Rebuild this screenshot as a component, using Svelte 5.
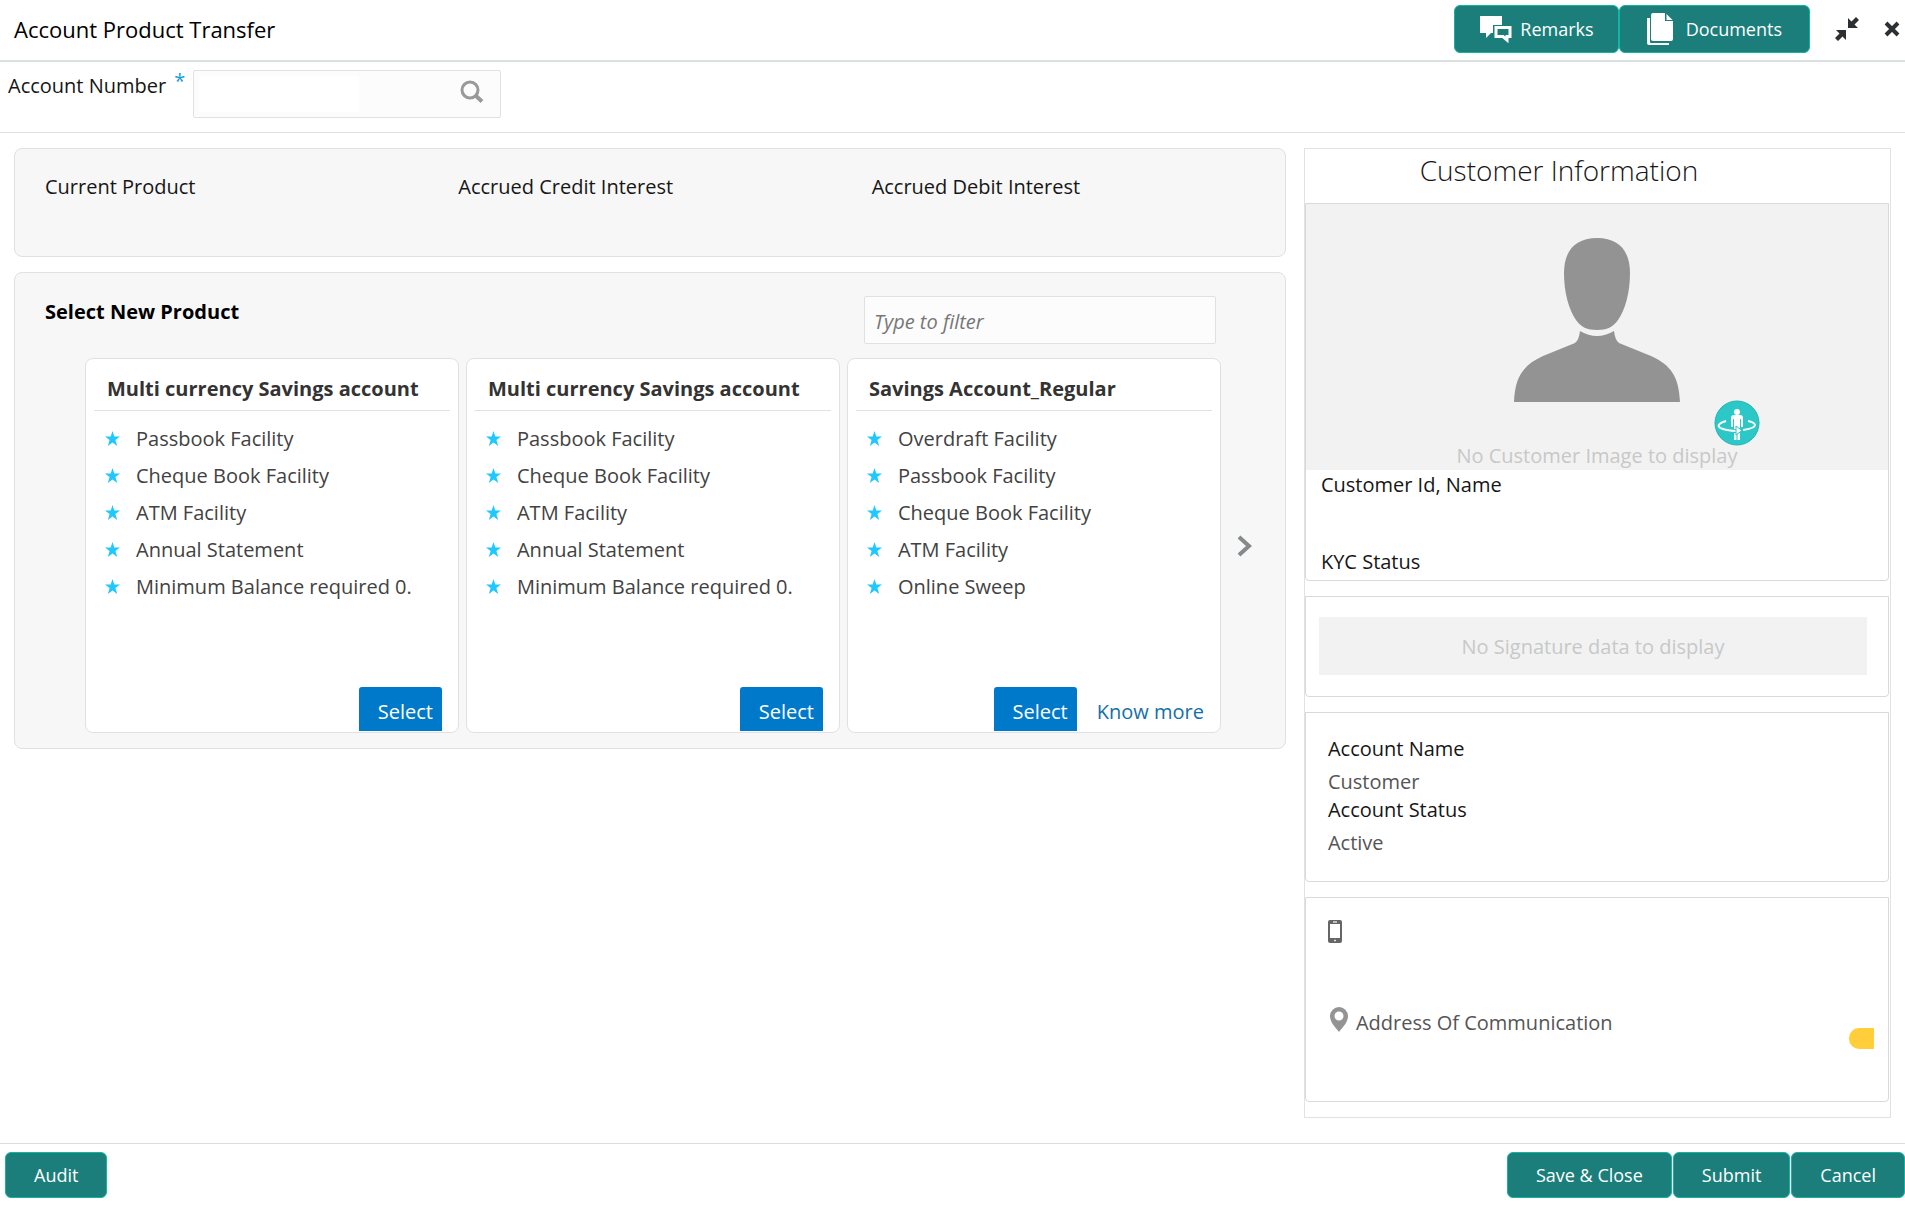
<script lang="ts">
	type Product = { id: number; title: string; features: string[]; more?: boolean };

	const summary = ['Current Product', 'Accrued Credit Interest', 'Accrued Debit Interest'];

	const products: Product[] = [
		{
			id: 1,
			title: 'Multi currency Savings account',
			features: [
				'Passbook Facility',
				'Cheque Book Facility',
				'ATM Facility',
				'Annual Statement',
				'Minimum Balance required 0.'
			]
		},
		{
			id: 2,
			title: 'Multi currency Savings account',
			features: [
				'Passbook Facility',
				'Cheque Book Facility',
				'ATM Facility',
				'Annual Statement',
				'Minimum Balance required 0.'
			]
		},
		{
			id: 3,
			title: 'Savings Account_Regular',
			features: [
				'Overdraft Facility',
				'Passbook Facility',
				'Cheque Book Facility',
				'ATM Facility',
				'Online Sweep'
			],
			more: true
		}
	];

	let accountNumber = $state('');
	let filter = $state('');
	let selectedId: number | null = $state(null);

	const visible = $derived(
		products.filter((p) => p.title.toLowerCase().includes(filter.trim().toLowerCase()))
	);
</script>

<div class="page">
	<header class="title-bar">
		<h1>Account Product Transfer</h1>
		<div class="title-actions">
			<button class="btn remarks" type="button">
				<svg width="33" height="28" viewBox="0 0 33 28" aria-hidden="true">
					<path d="M1 1h22v9H14v8h-2l-5 5v-5H1z" fill="#fff" />
					<path d="M17 12.500h14v9h-3v3.500l-4-3.500h-7z" fill="none" stroke="#fff" stroke-width="3" />
				</svg>
				Remarks
			</button>
			<button class="btn documents" type="button">
				<svg width="27" height="33" viewBox="0 0 27 33" aria-hidden="true">
					<path d="M0 5h3v24q0 1 1 1h18v2H2q-2 0-2-2z" fill="#fff" />
					<path d="M6 0h12v8h8v18q0 2-2 2H6q-2 0-2-2V2q0-2 2-2z" fill="#fff" />
					<path d="M19.500 1l6 6h-6z" fill="#fff" />
				</svg>
				Documents
			</button>
			<button class="icon-btn" type="button" aria-label="Collapse">
				<svg width="26" height="26" viewBox="0 0 26 26" aria-hidden="true">
					<path d="M14 2v10h10l-3.500-3.500L25 4l-3-3-4.500 4.500z" fill="#2d3033" />
					<path d="M12 24V14H2l3.500 3.500L1 22l3 3 4.500-4.500z" fill="#2d3033" />
				</svg>
			</button>
			<button class="icon-btn" type="button" aria-label="Close">
				<svg width="16" height="16" viewBox="0 0 16 16" aria-hidden="true">
					<path d="M2 2l12 12M14 2L2 14" stroke="#2d3033" stroke-width="4" />
				</svg>
			</button>
		</div>
	</header>

	<div class="account-row">
		<label for="account-number">Account Number <span class="required">*</span></label>
		<div class="account-field">
			<input id="account-number" type="text" bind:value={accountNumber} />
			<button class="icon-btn search" type="button" aria-label="Search account">
				<svg width="24" height="24" viewBox="0 0 24 24" fill="none" stroke="#999" aria-hidden="true">
					<circle cx="10" cy="10" r="8" stroke-width="3" />
					<path d="M15.500 15.500l6.500 6" stroke-width="4" />
				</svg>
			</button>
		</div>
	</div>

	<main>
		<div class="left">
			<section class="panel summary">
				{#each summary as item}
					<div>{item}</div>
				{/each}
			</section>

			<section class="panel picker">
				<div class="picker-head">
					<h2>Select New Product</h2>
					<input
						class="filter"
						type="text"
						placeholder="Type to filter"
						aria-label="Type to filter"
						bind:value={filter}
					/>
				</div>
				<div class="carousel">
					<div class="cards">
						{#each visible as product (product.id)}
							<article class="card">
								<h3>{product.title}</h3>
								<ul>
									{#each product.features as feature}
										<li>
											<svg width="15" height="15" viewBox="0 0 15 15" aria-hidden="true">
												<path
													d="M7.500 0l1.800 5.600H15l-4.600 3.500 1.800 5.900-4.700-3.600L2.800 15l1.800-5.900L0 5.600h5.700z"
													fill="#1fc8ff"
												/>
											</svg>
											{feature}
										</li>
									{/each}
								</ul>
								<div class="card-actions">
									<button class="select" type="button" onclick={() => (selectedId = product.id)}>
										Select
									</button>
									{#if product.more}
										<a href="#more">Know more</a>
									{/if}
								</div>
							</article>
						{/each}
					</div>
					<button class="icon-btn next" type="button" aria-label="Next products">
						<svg width="16" height="22" viewBox="0 0 16 22" aria-hidden="true">
							<path d="M2 2l10 9-10 9" fill="none" stroke="#85898b" stroke-width="4" />
						</svg>
					</button>
				</div>
			</section>
		</div>

		<aside class="customer">
			<h2>Customer Information</h2>

			<section class="box profile">
				<div class="photo">
					<svg class="avatar" width="168" height="166" viewBox="0 0 168 166" aria-hidden="true">
						<path
							d="M84 1C106 1 117 14 117 36C117 56 112 73 105 83C100 90 94 93 84 93C74 93 68 90 63 83C56 73 51 56 51 36C51 14 62 1 84 1z"
							fill="#939393"
						/>
						<path
							d="M67 94Q84 104 101 94Q102 103 106 106L138 119C158 128 166 140 167 165H1C2 140 10 128 30 119L62 106Q66 103 67 94z"
							fill="#939393"
						/>
					</svg>
					<button class="icon-btn view360" type="button" aria-label="Customer 360 view">
						<svg width="46" height="46" viewBox="0 0 46 46" aria-hidden="true">
							<circle cx="23" cy="23" r="22" fill="#2bc8c7" stroke="#22b5b2" />
							<circle cx="23" cy="12" r="3" fill="#fff" />
							<path d="M20 15h6q3 0 3 3v9h-2v-8h-1v10h-6V19h-1v8h-2v-9q0-3 3-3z" fill="#fff" />
							<path d="M20 33h2.500v7H20zM23.500 33H26v7h-2.500z" fill="#fff" />
							<path d="M12 21C2 24 2 28 13 30Q18 31 23 31" fill="none" stroke="#fff" stroke-width="2" />
							<path d="M34 21C44 23 44 28 29 30" fill="none" stroke="#fff" stroke-width="2" />
							<path d="M22 26l6 4.500-6 4.500z" fill="#fff" stroke="#2bc8c7" />
						</svg>
					</button>
					<span>No Customer Image to display</span>
				</div>
				<div class="profile-info">
					<div>Customer Id, Name</div>
					<div>KYC Status</div>
				</div>
			</section>

			<section class="box signature">
				<div>No Signature data to display</div>
			</section>

			<section class="box account">
				<dl>
					<dt>Account Name</dt>
					<dd>Customer</dd>
					<dt>Account Status</dt>
					<dd>Active</dd>
				</dl>
			</section>

			<section class="box contact">
				<svg width="14" height="23" viewBox="0 0 14 23" aria-hidden="true">
					<rect width="14" height="23" rx="2" fill="#666" />
					<path d="M2 4h10v14H2z" fill="#fff" />
					<path d="M5 2h4M6 20.500h2" stroke="#ddd" stroke-width="1.500" />
				</svg>
				<div class="address">
					<svg width="18" height="25" viewBox="0 0 18 25" aria-hidden="true">
						<path
							d="M9 0a9 9 0 0 1 9 9c0 6-5 11-9 16C5 20 0 15 0 9a9 9 0 0 1 9-9zm0 4.500a4.500 4.500 0 1 0 0 9 4.500 4.500 0 0 0 0-9z"
							fill="#949494"
						/>
					</svg>
					<span>Address Of Communication</span>
					<div class="tag"></div>
				</div>
			</section>
		</aside>
	</main>

	<footer>
		<button class="btn" type="button">Audit</button>
		<div class="footer-actions">
			<button class="btn" type="button">Save &amp; Close</button>
			<button class="btn" type="button">Submit</button>
			<button class="btn" type="button">Cancel</button>
		</div>
	</footer>
</div>

<style>
	:global(body) {
		background: #fff;
	}
	.page {
		display: flex;
		flex-direction: column;
		min-height: 100vh;
		box-sizing: border-box;
		overflow-x: hidden;
		color: #161616;
		font-family: 'Open Sans', 'Noto Sans', sans-serif;
		font-size: 20px;
		line-height: 28px;
	}
	.page :global(*) {
		box-sizing: border-box;
	}
	h1,
	h2,
	h3,
	ul,
	dl,
	dd {
		margin: 0;
		padding: 0;
	}
	button,
	input {
		font: inherit;
	}
	svg {
		display: block;
		flex: none;
	}

	/* Buttons */
	.btn {
		display: flex;
		align-items: center;
		justify-content: center;
		height: 48px;
		padding: 0 28px;
		border: 1px solid #12b5a2;
		border-radius: 6px;
		background: #1b7e7a;
		color: #fff;
		font-size: 18px;
		cursor: pointer;
	}
	.icon-btn {
		display: flex;
		padding: 0;
		border: none;
		background: none;
		cursor: pointer;
	}

	/* Title bar */
	.title-bar {
		display: flex;
		align-items: center;
		justify-content: space-between;
		height: 62px;
		padding: 0 5px 2px 14px;
		border-bottom: 2px solid #dbe0e2;
	}
	h1 {
		color: #000;
		font-size: 22px;
		font-weight: 400;
	}
	.title-actions {
		display: flex;
		align-items: center;
	}
	.title-actions .icon-btn {
		margin-left: 24px;
	}
	.remarks {
		gap: 8px;
		padding: 0 24px;
	}
	.documents {
		gap: 12px;
		padding: 0 27px;
	}

	/* Account row */
	.account-row {
		display: flex;
		gap: 8px;
		height: 71px;
		padding: 8px;
		border-bottom: 1px solid #e0e0e0;
	}
	.account-row label {
		display: flex;
		gap: 8px;
		padding-top: 2px;
	}
	.required {
		color: #14a0dc;
		line-height: 18px;
	}
	.account-field {
		display: flex;
		align-items: center;
		justify-content: space-between;
		width: 308px;
		height: 48px;
		padding: 5px 16px 5px 5px;
		border: 1px solid #dfe1e2;
		border-radius: 2px;
		background: #fcfcfc;
	}
	.account-field input {
		width: 160px;
		height: 100%;
		border: none;
		background: #fff;
	}
	.search {
		padding-bottom: 4px;
	}

	/* Main */
	main {
		display: grid;
		grid-template-columns: 13fr 6fr;
		gap: 18px;
		flex: 1;
		align-items: start;
		padding: 15px 14px 24px 14px;
	}
	.left {
		display: flex;
		flex-direction: column;
		gap: 15px;
		min-width: 0;
	}
	.panel {
		border: 1px solid #dfe1e2;
		border-radius: 8px;
		background: #f7f7f7;
	}
	.summary {
		display: grid;
		grid-template-columns: repeat(3, 1fr);
		height: 109px;
		padding: 24px 0 0 30px;
	}
	.picker {
		padding: 23px 32px 15px 30px;
	}
	.picker-head {
		display: flex;
		justify-content: space-between;
		margin-bottom: 14px;
		padding-right: 37px;
	}
	.picker-head h2 {
		padding-top: 2px;
		color: #000;
		font-size: 20px;
		font-weight: 700;
	}
	.filter {
		width: 352px;
		height: 48px;
		padding: 2px 9px 0;
		border: 1px solid #dfe1e2;
		border-radius: 2px;
		background: #fcfcfc;
	}
	.filter::placeholder {
		color: #777;
		font-style: italic;
		opacity: 1;
	}
	.carousel {
		display: flex;
		align-items: center;
		gap: 16px;
		padding-left: 40px;
	}
	.cards {
		display: grid;
		grid-template-columns: repeat(3, 1fr);
		gap: 7px;
		flex: 1;
	}
	.card {
		display: flex;
		flex-direction: column;
		height: 375px;
		padding: 16px 8px 1px;
		border: 1px solid #dfe1e2;
		border-radius: 8px;
		background: #fff;
		color: #424242;
	}
	.card h3 {
		padding: 0 13px 7px;
		border-bottom: 1px solid #dfe1e2;
		color: #333;
		font-size: 20px;
		font-weight: 700;
		white-space: nowrap;
	}
	.card ul {
		flex: 1;
		padding: 9px 11px 0;
		list-style: none;
	}
	.card li {
		display: flex;
		align-items: center;
		gap: 16px;
		height: 37px;
		white-space: nowrap;
	}
	.card-actions {
		display: flex;
		align-items: center;
		justify-content: flex-end;
		gap: 20px;
		padding-right: 8px;
	}
	.select {
		height: 44px;
		padding: 6px 9px 0 19px;
		border: none;
		border-radius: 3px 3px 0 0;
		background: #0079ca;
		color: #fff;
		cursor: pointer;
	}
	.card-actions a {
		padding-top: 6px;
		color: #146fa8;
		text-decoration: none;
	}

	/* Customer column */
	.customer {
		padding: 0 1px 15px 0;
		border: 1px solid #e2e2e2;
	}
	.customer > h2 {
		padding: 7px 76px 19px 0;
		font-size: 28px;
		font-weight: 300;
		text-align: center;
	}
	.box {
		margin-bottom: 15px;
		border: 1px solid #d9d9d9;
		border-radius: 0 0 4px 4px;
	}
	.box:last-child {
		margin-bottom: 0;
	}
	.photo {
		position: relative;
		display: flex;
		flex-direction: column;
		align-items: center;
		justify-content: space-between;
		height: 266px;
		padding-top: 33px;
		background: #f2f2f2;
		color: #c8c8c8;
	}
	.view360 {
		position: absolute;
		right: 128px;
		bottom: 24px;
	}
	.profile-info {
		display: flex;
		flex-direction: column;
		gap: 49px;
		padding: 1px 15px 4px;
	}
	.signature {
		padding: 20px 21px 21px 13px;
	}
	.signature div {
		padding: 16px 0 14px;
		background: #f2f2f2;
		color: #c8c8c8;
		text-align: center;
	}
	.account {
		padding: 22px 22px 24px;
	}
	.account dd {
		padding-top: 5px;
		color: #555;
	}
	.contact {
		height: 205px;
		padding: 22px 14px 0 22px;
	}
	.address {
		display: flex;
		gap: 8px;
		margin-top: 64px;
		padding-left: 2px;
		color: #555;
	}
	.address span {
		padding-top: 2px;
	}
	.tag {
		width: 25px;
		height: 21px;
		margin: 21px 0 0 auto;
		border-radius: 10px 0 0 10px;
		background: #ffce3a;
	}

	/* Footer */
	footer {
		display: flex;
		justify-content: space-between;
		padding: 8px 0 9px 5px;
		border-top: 1px solid #dcdcdc;
	}
	footer .btn {
		height: 46px;
	}
	.footer-actions {
		display: flex;
		gap: 1px;
	}
</style>
